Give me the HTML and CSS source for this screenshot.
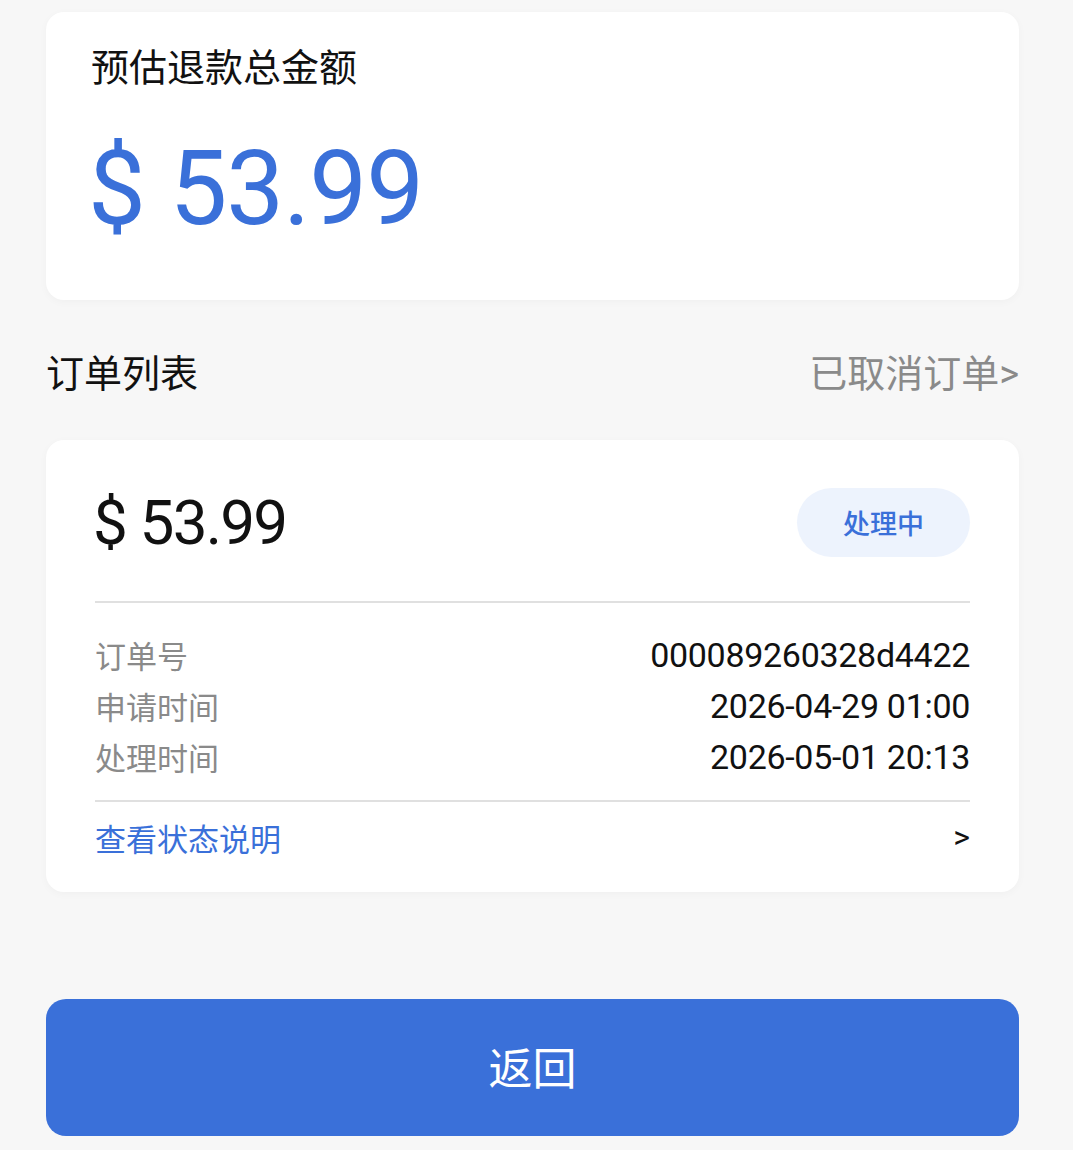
FILE: index.html
```html
<!DOCTYPE html>
<html lang="zh">
<head>
<meta charset="utf-8">
<link rel="stylesheet" href="styles.css">
</head>
<body>
<div class="page">
  <section class="card summary">
    <div class="summary-title">预估退款总金额</div>
    <div class="summary-amount">$ 53.99</div>
  </section>

  <div class="list-head">
    <div class="list-title">订单列表</div>
    <div class="list-link">已取消订单&gt;</div>
  </div>

  <section class="card order">
    <div class="order-top">
      <div class="order-amount">$ 53.99</div>
      <div class="badge">处理中</div>
    </div>
    <div class="divider"></div>
    <div class="rows">
      <div class="row"><span class="label">订单号</span><span class="value">000089260328d4422</span></div>
      <div class="row"><span class="label">申请时间</span><span class="value">2026-04-29 01:00</span></div>
      <div class="row"><span class="label">处理时间</span><span class="value">2026-05-01 20:13</span></div>
    </div>
    <div class="divider"></div>
    <div class="status-row">
      <span class="status-link">查看状态说明</span>
      <span class="chev">&gt;</span>
    </div>
  </section>

  <button class="back-btn">返回</button>
</div>
</body>
</html>
```

FILE: styles.css
```css
html, body {
  margin: 0;
  padding: 0;
  background: #f7f7f7;
}
body {
  font-family: "Roboto", "Noto Sans CJK SC", sans-serif;
  color: #111;
}
.page {
  padding: 12px 54px 0 46px;
  display: flex;
  flex-direction: column;
}
.card {
  background: #fff;
  border-radius: 18px;
  box-shadow: 0 2px 8px rgba(0,0,0,0.03);
}
.summary {
  height: 288px;
  box-sizing: border-box;
  padding: 36px 45px 0 45px;
}
.summary-title {
  font-size: 38px;
  line-height: 40px;
  color: #111;
}
.summary-amount {
  margin-top: 46px;
  font-size: 103px;
  line-height: 110px;
  color: #3a70d9;
  letter-spacing: -1px;
  margin-left: -3px;
}
.list-head {
  display: flex;
  justify-content: space-between;
  align-items: center;
  height: 140px;
}
.list-title {
  font-size: 38px;
  color: #111;
}
.list-link {
  font-size: 38px;
  color: #8a8a8a;
}
.order {
  padding: 48px 49px 0 49px;
  height: 452px;
  box-sizing: border-box;
}
.order-top {
  display: flex;
  justify-content: space-between;
  align-items: center;
  height: 69px;
}
.order-amount {
  font-size: 62px;
  color: #111;
  letter-spacing: -1.8px;
  margin-left: -2px;
}
.badge {
  width: 173px;
  height: 69px;
  border-radius: 35px;
  background: #edf3fd;
  color: #3a70d9;
  font-size: 27px;
  font-weight: 500;
  display: flex;
  align-items: center;
  justify-content: center;
}
.divider {
  height: 2px;
  background: #e0e0e0;
}
.order-top + .divider {
  margin-top: 44px;
}
.rows {
  padding: 26px 0 18px;
  display: flex;
  flex-direction: column;
}
.row {
  display: flex;
  justify-content: space-between;
  align-items: center;
  height: 51px;
  font-size: 31px;
}
.label {
  color: #8a8a8a;
}
.value {
  color: #111;
  font-size: 34px;
  letter-spacing: -0.3px;
}
.status-row {
  display: flex;
  justify-content: space-between;
  align-items: center;
  height: 70px;
  font-size: 31px;
}
.status-link {
  color: #3a70d9;
}
.chev {
  color: #111;
  font-size: 32px;
}
.back-btn {
  margin-top: 107px;
  height: 137px;
  border: none;
  border-radius: 20px;
  background: #3a70d9;
  color: #fff;
  font-family: "Noto Sans CJK SC", sans-serif;
  font-size: 44px;
  padding: 0 0 4px;
}
```
